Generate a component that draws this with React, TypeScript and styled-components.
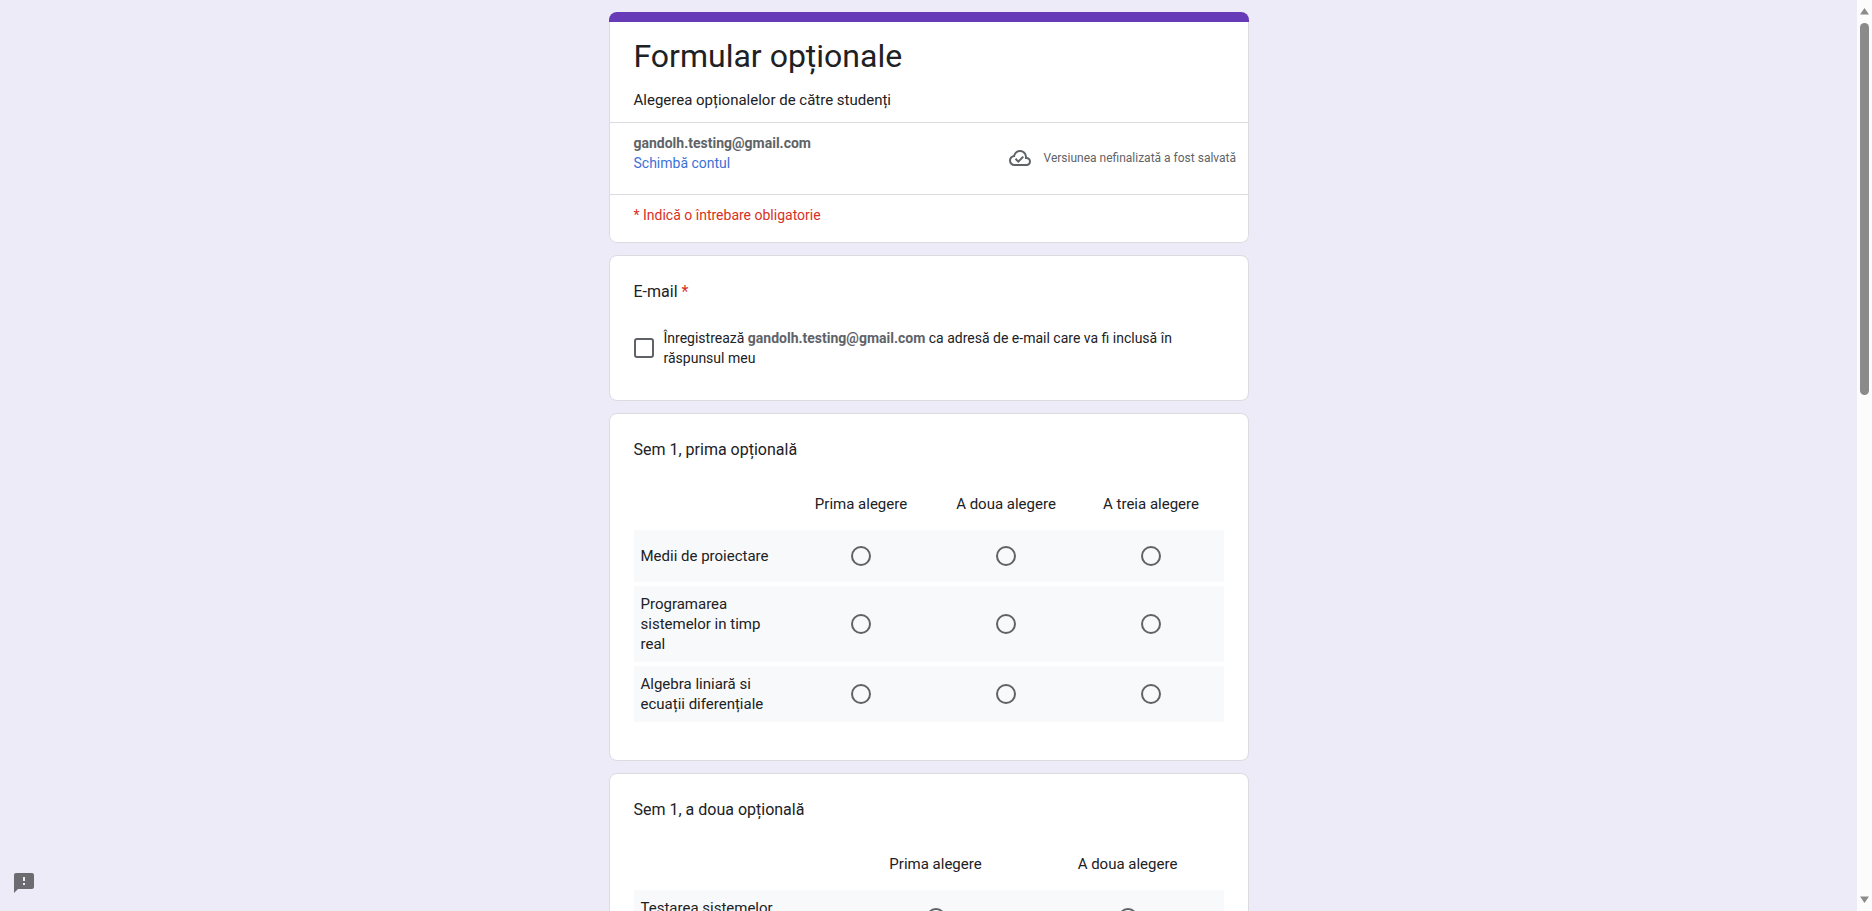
import React from "react";
import styled, { createGlobalStyle } from "styled-components";
import { MdFeedback } from "react-icons/md";

const GlobalStyle = createGlobalStyle`
  *, *::before, *::after { box-sizing: border-box; }
  body {
    margin: 0;
    font-family: Roboto, Arial, sans-serif;
    color: #202124;
    background: #eeebf8;
  }
`;

const Page = styled.div`
  display: grid;
  grid-template-columns: 1fr 15px;
  height: 100vh;
`;

const Content = styled.main`
  overflow-y: auto;
  scrollbar-width: none;
  padding: 12px 0;
`;

const Form = styled.form`
  display: flex;
  flex-direction: column;
  gap: 12px;
  width: 100%;
  max-width: 640px;
  margin: 0 auto;
`;

const HeaderCard = styled.section`
  border-top: 10px solid #673ab7;
  border-radius: 8px;
  overflow: hidden;
`;

const HeaderBody = styled.div`
  background: #fff;
  border: 1px solid #dadce0;
  border-top: 0;
  border-radius: 0 0 8px 8px;
  overflow: hidden;
`;

const QuestionCard = styled.section`
  padding: 24px 24px 32px;
  background: #fff;
  border: 1px solid #dadce0;
  border-radius: 8px;
`;

const Intro = styled.header`
  display: flex;
  flex-direction: column;
  gap: 14px;
  padding: 14px 24px 12px;
`;

const Title = styled.h1`
  margin: 0;
  font-size: 32px;
  font-weight: 400;
  line-height: 40px;
`;

const Description = styled.p`
  margin: 0;
  font-size: 15px;
  line-height: 20px;
`;

const AccountRow = styled.div`
  display: flex;
  justify-content: space-between;
  align-items: center;
  border: solid #dadce0;
  border-width: 1px 0;
  padding-left: 24px;
`;

const Account = styled.div`
  display: flex;
  flex-direction: column;
  align-items: flex-start;
  padding: 10px 0 21px;
  font-size: 14px;
  line-height: 20px;
`;

const Email = styled.strong`
  font-weight: 700;
  color: #5f6368;
`;

const SwitchLink = styled.a`
  color: #3c71d8;
  text-decoration: none;
`;

const DraftStatus = styled.div`
  display: flex;
  flex: 0 0 240px;
  align-items: center;
  gap: 12px;
  padding-bottom: 2px;
  color: #5f6368;
  font-size: 12px;
  line-height: 16px;
  white-space: nowrap;
`;

const RequiredNote = styled.p`
  margin: 0;
  padding: 10px 24px 17px;
  color: #d93025;
  font-size: 14px;
  line-height: 20px;
`;

const QuestionTitle = styled.h2`
  margin: 0;
  font-size: 16px;
  font-weight: 400;
  line-height: 24px;
`;

const Asterisk = styled.span`
  color: #d93025;
`;

const CheckLabel = styled.label`
  display: flex;
  align-items: center;
  gap: 10px;
  margin-top: 24px;
  font-size: 14px;
  line-height: 20px;
`;

const Checkbox = styled.input`
  appearance: none;
  flex: none;
  width: 20px;
  height: 20px;
  margin: 0;
  border: 2px solid #5f6368;
  border-radius: 3px;
  &:checked { background: #673ab7; border-color: #673ab7; }
`;

const Grid = styled.table`
  width: 100%;
  margin: 16px 0 2px;
  table-layout: fixed;
  border-spacing: 0 4px;
  font-size: 15px;
  line-height: 20px;
`;

const LabelColumn = styled.col<{ $width: number }>`
  width: ${(p) => p.$width}px;
`;

const HeadCell = styled.th`
  height: 44px;
  padding: 0;
  font-weight: 400;
  text-align: center;
`;

const Row = styled.tr`
  height: 52px;
  background: #f8f9fa;
`;

const RowLabel = styled.th`
  padding: 8px 7px;
  font-weight: 400;
  text-align: left;
`;

const LabelText = styled.span`
  display: block;
  max-width: 140px;
`;

const OptionCell = styled.td`
  padding: 0;
  text-align: center;
  vertical-align: middle;
`;

const Radio = styled.input`
  appearance: none;
  display: block;
  width: 20px;
  height: 20px;
  margin: 0 auto;
  border: 2px solid #5f6368;
  border-radius: 50%;
  &:checked { border-color: #673ab7; background: radial-gradient(#673ab7 5px, transparent 6px); }
`;

const FeedbackButton = styled.button`
  position: fixed;
  left: 12px;
  bottom: 16px;
  display: flex;
  padding: 0;
  border: 0;
  background: none;
  color: #6b6b70;
`;

const ScrollRail = styled.div`
  display: flex;
  flex-direction: column;
  align-items: center;
  gap: 8px;
  padding: 8px 0;
  background: #fcfcfc;
`;

const Track = styled.div`
  flex: 1;
  width: 9px;
`;

const Thumb = styled.div`
  height: 43%;
  border-radius: 5px;
  background: #8b8b8b;
`;

const CloudDone = () => (
  <svg width="24" height="24" viewBox="0 -960 960 960" fill="currentColor" aria-hidden="true">
    <path d="m414-280 226-226-58-58-169 169-84-84-57 57 142 142ZM260-160q-91 0-155.500-63T40-377q0-78 47-139t123-78q25-92 100-149t170-57q117 0 198.500 81.500T760-520q69 8 114.500 59.500T920-340q0 75-52.500 127.500T740-160H260Zm0-80h480q42 0 71-29t29-71q0-42-29-71t-71-29h-60v-80q0-83-58.500-141.500T480-720q-83 0-141.500 58.500T280-520h-20q-58 0-99 41t-41 99q0 58 41 99t99 41Zm220-240Z" />
  </svg>
);

const Arrow = ({ down = false }: { down?: boolean }) => (
  <svg width="9" height="7" viewBox="0 0 9 7" fill="#8b8b8b" aria-hidden="true">
    <path d={down ? "M0 0.500h9L4.500 7z" : "M0 6.500h9L4.500 0z"} />
  </svg>
);

type GridQuestion = {
  id: string;
  title: string;
  labelWidth: number;
  choices: string[];
  rows: string[];
};

const questions: GridQuestion[] = [
  {
    id: "sem1-1",
    title: "Sem 1, prima opțională",
    labelWidth: 155,
    choices: ["Prima alegere", "A doua alegere", "A treia alegere"],
    rows: ["Medii de proiectare", "Programarea sistemelor in timp real", "Algebra liniară si ecuații diferențiale"],
  },
  {
    id: "sem1-2",
    title: "Sem 1, a doua opțională",
    labelWidth: 206,
    choices: ["Prima alegere", "A doua alegere"],
    rows: ["Testarea sistemelor de calcul"],
  },
];

const ChoiceGrid = ({ question }: { question: GridQuestion }) => (
  <QuestionCard>
    <QuestionTitle id={question.id}>{question.title}</QuestionTitle>
    <Grid aria-labelledby={question.id}>
      <colgroup>
        <LabelColumn $width={question.labelWidth} />
        {question.choices.map((choice) => (
          <col key={choice} />
        ))}
      </colgroup>
      <thead>
        <tr>
          <td />
          {question.choices.map((choice) => (
            <HeadCell key={choice} scope="col">{choice}</HeadCell>
          ))}
        </tr>
      </thead>
      <tbody>
        {question.rows.map((row) => (
          <Row key={row}>
            <RowLabel scope="row">
              <LabelText>{row}</LabelText>
            </RowLabel>
            {question.choices.map((choice) => (
              <OptionCell key={choice}>
                <Radio type="radio" name={`${question.id}-${row}`} value={choice} aria-label={`${row}, ${choice}`} />
              </OptionCell>
            ))}
          </Row>
        ))}
      </tbody>
    </Grid>
  </QuestionCard>
);

export default function App() {
  return (
    <>
      <GlobalStyle />
      <Page>
        <Content>
          <Form>
            <HeaderCard>
              <HeaderBody>
                <Intro>
                  <Title>Formular opționale</Title>
                  <Description>Alegerea opționalelor de către studenți</Description>
                </Intro>
                <AccountRow>
                  <Account>
                    <Email>gandolh.testing@gmail.com</Email>
                    <SwitchLink href="#account">Schimbă contul</SwitchLink>
                  </Account>
                  <DraftStatus>
                    <CloudDone />
                    <span>Versiunea nefinalizată a fost salvată</span>
                  </DraftStatus>
                </AccountRow>
                <RequiredNote>* Indică o întrebare obligatorie</RequiredNote>
              </HeaderBody>
            </HeaderCard>
            <QuestionCard>
              <QuestionTitle>
                E-mail <Asterisk>*</Asterisk>
              </QuestionTitle>
              <CheckLabel>
                <Checkbox type="checkbox" name="record-email" />
                <span>
                  Înregistrează <Email>gandolh.testing@gmail.com</Email> ca adresă de e-mail care va fi inclusă în
                  răspunsul meu
                </span>
              </CheckLabel>
            </QuestionCard>
            {questions.map((question) => (
              <ChoiceGrid key={question.id} question={question} />
            ))}
          </Form>
        </Content>
        <ScrollRail aria-hidden="true">
          <Arrow />
          <Track>
            <Thumb />
          </Track>
          <Arrow down />
        </ScrollRail>
      </Page>
      <FeedbackButton type="button" aria-label="Trimite feedback">
        <MdFeedback size={24} />
      </FeedbackButton>
    </>
  );
}
